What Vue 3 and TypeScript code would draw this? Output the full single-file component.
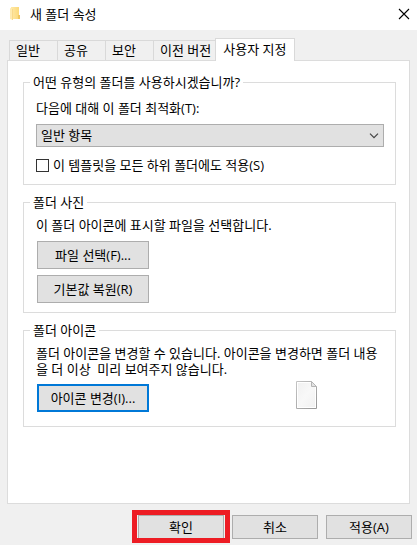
<script setup lang="ts">
import { ref } from 'vue'

const tabs: string[] = ['일반', '공유', '보안', '이전 버전', '사용자 지정']
const activeTab = ref<string>('사용자 지정')
const template = ref<string>('일반 항목')
const applyToSubfolders = ref<boolean>(false)
</script>

<template>
  <main class="dialog">
    <header class="titlebar">
      <svg class="folder" width="12" height="14" viewBox="0 0 12 14" aria-hidden="true">
        <defs>
          <linearGradient id="folderFront" x1="0" y1="0" x2="1" y2="0">
            <stop offset="0" stop-color="#ffe9a6" />
            <stop offset="1" stop-color="#fbd775" />
          </linearGradient>
        </defs>
        <path d="M1 0h8v9h1v3H1z" fill="url(#folderFront)" />
        <path d="M8 8h2v4H8z" fill="#efc765" />
        <path d="M0 1l3 1v11L0 12z" fill="#ffebb0" />
        <path d="M2 2h1v11H2z" fill="#f8d98a" />
      </svg>
      <h1 class="title">새 폴더 속성</h1>
      <button class="close" type="button" aria-label="닫기">
        <svg width="12" height="12" viewBox="0 0 12 12" aria-hidden="true">
          <path d="M1 1l10 10M11 1L1 11" stroke="#000" stroke-width="1.1" />
        </svg>
      </button>
    </header>

    <nav class="tabs" role="tablist">
      <button
        v-for="tab in tabs"
        :key="tab"
        type="button"
        role="tab"
        class="tab"
        :class="{ active: tab === activeTab }"
        :aria-selected="tab === activeTab"
        @click="activeTab = tab"
      >{{ tab }}</button>
    </nav>

    <section class="panel" role="tabpanel">
      <fieldset class="group kind">
        <legend>어떤 유형의 폴더를 사용하시겠습니까?</legend>
        <label class="line" for="template">다음에 대해 이 폴더 최적화(T):</label>
        <div class="combo">
          <select id="template" v-model="template">
            <option>일반 항목</option>
          </select>
          <svg class="chevron" width="10" height="6" viewBox="0 0 10 6" aria-hidden="true">
            <path d="M1 .7l4 4 4-4" fill="none" stroke="#444" stroke-width="1.2" />
          </svg>
        </div>
        <label class="check">
          <input v-model="applyToSubfolders" type="checkbox" />
          <span>이 템플릿을 모든 하위 폴더에도 적용(S)</span>
        </label>
      </fieldset>

      <fieldset class="group photo">
        <legend>폴더 사진</legend>
        <p class="line">이 폴더 아이콘에 표시할 파일을 선택합니다.</p>
        <div class="stack">
          <button class="btn wide" type="button">파일 선택(F)...</button>
          <button class="btn wide" type="button">기본값 복원(R)</button>
        </div>
      </fieldset>

      <fieldset class="group icon">
        <legend>폴더 아이콘</legend>
        <p class="line note">폴더 아이콘을 변경할 수 있습니다. 아이콘을 변경하면 폴더 내용<br />을 더 이상&nbsp; 미리 보여주지 않습니다.</p>
        <div class="icon-row">
          <button class="btn wide focused" type="button">아이콘 변경(I)...</button>
          <svg class="page" width="21" height="28" viewBox="0 0 21 28" aria-hidden="true">
            <defs>
              <linearGradient id="sheet" x1="0" y1="0" x2="1" y2="1">
                <stop offset="0" stop-color="#f1f1f1" />
                <stop offset=".5" stop-color="#f8f8f8" />
                <stop offset="1" stop-color="#f1f1f1" />
              </linearGradient>
              <linearGradient id="sheetEdge" x1="0" y1="0" x2="1" y2="1">
                <stop offset="0" stop-color="#c4c4c4" />
                <stop offset="1" stop-color="#979797" />
              </linearGradient>
            </defs>
            <path d="M.5.5h15l5 5v22H.5z" fill="#fff" stroke="url(#sheetEdge)" />
            <path d="M2 2h13v4h4v20H2z" fill="url(#sheet)" />
            <path d="M15.5.5v5h5z" fill="#e3e3e3" stroke="#b5b5b5" />
          </svg>
        </div>
      </fieldset>
    </section>

    <footer class="actions">
      <button class="btn marked" type="button">확인</button>
      <button class="btn" type="button">취소</button>
      <button class="btn" type="button">적용(A)</button>
    </footer>
  </main>
</template>

<style>
body {
  margin: 0;
}
</style>

<style scoped>
.dialog,
.dialog * {
  box-sizing: border-box;
}

.dialog {
  display: flex;
  flex-direction: column;
  min-height: 100vh;
  background: #f0f0f0;
  color: #000;
  font-family: "Open Sans", "Noto Sans CJK KR", sans-serif;
  font-size: 13px;
  line-height: 17px;
}

button,
select {
  font: inherit;
  color: inherit;
  border-radius: 0;
}

.titlebar {
  display: flex;
  align-items: center;
  height: 30px;
  padding: 0 7px 2px 10px;
  background: #fff;
}

.title {
  flex: 1;
  margin: 0 0 0 8px;
  font-size: 13px;
  font-weight: 400;
}

.close {
  display: flex;
  padding: 0;
  border: 0;
  background: none;
}

.tabs {
  display: flex;
  align-items: flex-end;
  height: 30px;
  padding: 0 9px;
}

.tab {
  height: 20px;
  min-width: 48px;
  padding: 0 4px 0 6px;
  border: 1px solid #d9d9d9;
  border-width: 1px 0 0 1px;
  background: #f0f0f0;
  text-align: left;
  white-space: nowrap;
}

.tab.active {
  position: relative;
  height: 23px;
  margin-bottom: -1px;
  padding: 0 8px 2px 7px;
  border-right-width: 1px;
  background: #fff;
}

.panel {
  flex: 1;
  display: flex;
  flex-direction: column;
  gap: 9px;
  margin: 0 7px;
  padding: 13px 13px 16px 15px;
  border: 1px solid #dcdcdc;
  background: #fff;
}

.group {
  min-width: 0;
  margin: 0;
  padding: 6px 11px 9px 12px;
  border: 1px solid #dcdcdc;
}

.group.kind {
  padding-top: 9px;
  padding-bottom: 10px;
}

.group.icon {
  padding-bottom: 14px;
}

legend {
  margin-left: -6px;
  padding: 0 3px;
}

.line {
  display: block;
  margin: 0 0 7px;
}

.note {
  line-height: 16px;
}

.combo {
  display: flex;
  align-items: center;
  margin-bottom: 10px;
}

.combo select {
  flex: 1;
  height: 23px;
  padding: 0 24px 0 4px;
  border: 1px solid #adadad;
  background: #e1e1e1;
  appearance: none;
}

.chevron {
  margin-left: -15px;
  margin-right: 5px;
  pointer-events: none;
}

.check {
  display: flex;
  align-items: center;
  gap: 4px;
}

.check input {
  width: 13px;
  height: 13px;
  margin: 0;
  border: 1px solid #333;
  background: #fff;
  appearance: none;
}

.check input:checked {
  background: #333;
  box-shadow: inset 0 0 0 2px #fff;
}

.stack {
  display: flex;
  flex-direction: column;
  gap: 6px;
  padding-left: 1px;
}

.icon-row {
  display: flex;
  align-items: flex-start;
  justify-content: space-between;
  height: 28px;
  padding: 0 67px 0 1px;
}

.page {
  margin-top: -3px;
}

.btn {
  width: 86px;
  height: 24px;
  padding: 0;
  border: 1px solid #adadad;
  background: #e1e1e1;
  text-align: center;
  white-space: nowrap;
}

.btn.wide {
  width: 112px;
  height: 28px;
}

.btn.focused {
  border: 2px solid #0078d7;
}

.actions {
  display: flex;
  justify-content: flex-end;
  gap: 8px;
  padding: 11px 5px 6px;
}

.btn.marked {
  position: relative;
}

.btn.marked::after {
  content: "";
  position: absolute;
  inset: -6px -7px -5px;
  border: 5px solid #ed1c24;
  pointer-events: none;
}
</style>
